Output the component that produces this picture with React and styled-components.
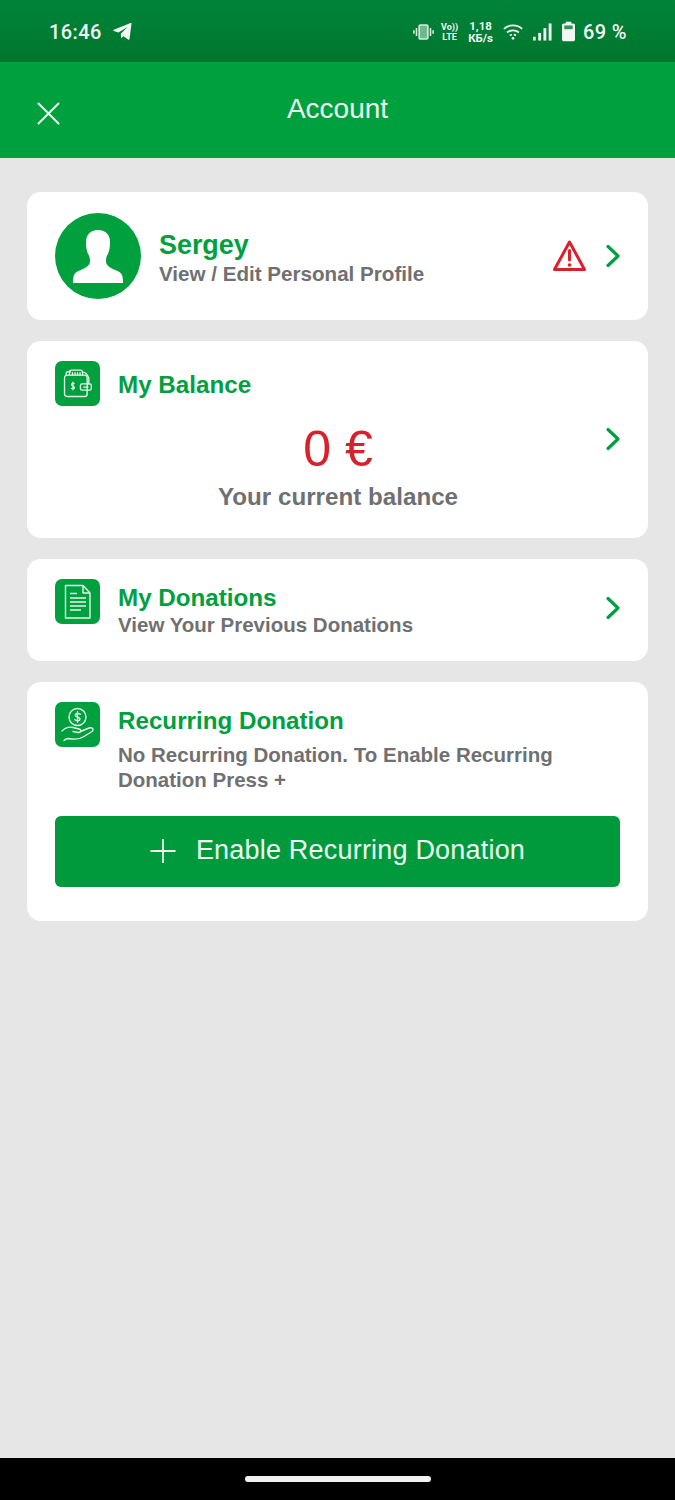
import React from 'react';
import styled, { createGlobalStyle } from 'styled-components';

const green = '#00a03e';
const grey = '#6f7072';

const GlobalStyle = createGlobalStyle`
  html, body {
    margin: 0;
    padding: 0;
    background: #e6e6e6;
  }
  * {
    box-sizing: border-box;
  }
`;

const Screen = styled.div`
  width: 675px;
  height: 1500px;
  display: flex;
  flex-direction: column;
  background: #e6e6e6;
  font-family: "Liberation Sans", Arial, sans-serif;
  overflow: hidden;
`;

const StatusBar = styled.div`
  height: 62px;
  flex: none;
  display: flex;
  align-items: center;
  justify-content: space-between;
  padding: 1px 48px 0 49px;
  background: linear-gradient(180deg, #00843a 0%, #00762e 100%);
  color: #f1f7f2;
  font-family: Roboto, sans-serif;
`;

const StatusGroup = styled.div`
  display: flex;
  align-items: center;
  gap: ${(p) => p.$gap || 0}px;
`;

const Clock = styled.span`
  font-size: 20px;
  font-weight: 500;
  letter-spacing: 0.4px;
`;

const NetSpeed = styled.span`
  display: flex;
  flex-direction: column;
  align-items: center;
  font-size: 11.5px;
  font-weight: 700;
  line-height: 12px;
`;

const VoLte = styled(NetSpeed)`
  font-size: 9px;
  line-height: 10px;
  margin-left: -3px;
`;

const Battery = styled.span`
  font-size: 20px;
  font-weight: 500;
  letter-spacing: 0.4px;
  margin-left: -2px;
`;

const Header = styled.header`
  height: 96px;
  flex: none;
  display: flex;
  align-items: center;
  position: relative;
  justify-content: center;
  padding-bottom: 2px;
  background: ${green};
  color: #eefaf1;
`;

const CloseButton = styled.span`
  position: absolute;
  left: 37px;
  top: 40px;
  display: flex;
`;

const Title = styled.h1`
  margin: 0;
  font-size: 28px;
  font-weight: 400;
`;

const Content = styled.main`
  flex: 1;
  display: flex;
  flex-direction: column;
  gap: 21px;
  padding: 34px 27px 0;
`;

const Card = styled.section`
  width: 621px;
  height: ${(p) => p.$height}px;
  display: flex;
  align-items: ${(p) => p.$align || 'flex-start'};
  background: #fff;
  border-radius: 14px;
  padding: ${(p) => p.$padding || '20px 27px 0 28px'};
`;

const Avatar = styled.div`
  width: 86px;
  height: 86px;
  flex: none;
  border-radius: 50%;
  background: ${green};
  overflow: hidden;
  display: flex;
`;

const IconTile = styled.div`
  width: 45px;
  height: 45px;
  flex: none;
  border-radius: 7px;
  background: ${green};
  display: flex;
  align-items: center;
  justify-content: center;
`;

const Body = styled.div`
  flex: 1;
  min-width: 0;
  margin-left: ${(p) => p.$left || 18}px;
  padding-top: ${(p) => p.$top || 0}px;
`;

const CardTitle = styled.div`
  color: ${green};
  font-size: ${(p) => p.$size || 24.2}px;
  font-weight: 700;
  line-height: ${(p) => p.$line || 28}px;
`;

const CardText = styled.div`
  color: ${grey};
  font-size: ${(p) => p.$size || 20.5}px;
  font-weight: 700;
  line-height: 25px;
  margin-top: ${(p) => p.$top || 0}px;
`;

const ChevronSlot = styled.div`
  flex: none;
  display: flex;
  align-self: center;
  margin-bottom: ${(p) => p.$lift || 0}px;
`;

const BalanceColumn = styled.div`
  flex: 1;
  min-width: 0;
  align-self: stretch;
`;

const BalanceHead = styled.div`
  display: flex;
`;

const Amount = styled.div`
  margin: 14px 0 0 16px;
  text-align: center;
  color: #d9212c;
  font-size: 50px;
  line-height: 58px;
`;

const BalanceLabel = styled.div`
  margin: 5px 0 0 16px;
  text-align: center;
  color: ${grey};
  font-size: 24.2px;
  font-weight: 700;
  line-height: 28px;
`;

const EnableButton = styled.button`
  width: 565px;
  height: 71px;
  margin-top: 24px;
  padding: 0 0 2px;
  display: flex;
  align-items: center;
  justify-content: center;
  gap: 20px;
  border: none;
  border-radius: 6px;
  background: #009a3d;
  color: #eefaf1;
  font-family: inherit;
  font-size: 27px;
  letter-spacing: 0.2px;
`;

const RecurringCard = styled(Card)`
  display: block;
`;

const RecurringHead = styled.div`
  display: flex;
`;

const HomeBar = styled.div`
  height: 42px;
  flex: none;
  display: flex;
  justify-content: center;
  padding-top: 18px;
  background: #000;
`;

const HomePill = styled.div`
  width: 186px;
  height: 6px;
  border-radius: 3px;
  background: #f2f2f2;
`;

const Chevron = ({ lift }) => (
  <ChevronSlot $lift={lift}>
    <svg width="16" height="24" viewBox="0 0 16 24" fill="none">
      <path d="M3 2.500 L13 12 L3 21.500" stroke={green} strokeWidth="3.200" strokeLinecap="round" strokeLinejoin="round" />
    </svg>
  </ChevronSlot>
);

const Warning = () => (
  <svg width="33" height="32" viewBox="0 0 33 32" fill="none" style={{ flex: 'none', marginRight: 19 }}>
    <path d="M16.500 2 L31.500 29.500 L1.500 29.500 Z" stroke="#d9212c" strokeWidth="3" strokeLinejoin="round" />
    <path d="M16.500 10.500 V20" stroke="#d9212c" strokeWidth="3" strokeLinecap="round" />
    <circle cx="16.500" cy="25" r="1.800" fill="#d9212c" />
  </svg>
);

const Person = () => (
  <svg width="86" height="86" viewBox="0 0 86 86">
    <path
      fill="#fff"
      d="M43 17C35 17 31 22 31 29C31 34 31.500 37 33 41C34.500 43 35 45 35 48C35 52 32 54 28 56C23 58 20 59.500 19 62C18 64.500 18 68 18 70H68C68 68 68 64.500 67 62C66 59.500 63 58 58 56C54 54 51 52 51 48C51 45 51.500 43 53 41C54.500 37 55 34 55 29C55 22 51 17 43 17Z"
    />
  </svg>
);

const WalletIcon = () => (
  <svg width="31" height="31" viewBox="0 0 37 37" fill="none" stroke="#e4f5ea" strokeWidth="1.600" strokeLinejoin="round" strokeLinecap="round">
    <path d="M3 12 C3 9.500 5 8.500 7 8.500 H27 C29 8.500 30 10 30 12 V31 C30 33 28.500 34 27 34 H7 C5 34 3 33 3 31 Z" />
    <path d="M5 8.500 V6.500 C5 5 6 4.500 7.500 4.500 H10" />
    <path d="M9 8.500 V4.500 C9 3 10 2.500 11.500 2.500 H22 C23.500 2.500 24.500 3.500 24.500 5 V8.500" />
    <path d="M12.500 8.500 V5.500 M15.500 8.500 V5.500 M18.500 8.500 V5.500 M21.500 8.500 V5.500" />
    <path d="M24.500 5 C27.500 5 30 7 32 12 V19" />
    <rect x="22" y="19" width="13" height="7.500" rx="2" />
    <path d="M26 22.800 H31" />
    <path d="M14.500 18.500 C13 17.800 11.500 18.300 11.500 19.700 C11.500 21.700 14.800 21.300 14.800 23.300 C14.800 24.700 13 25.200 11.300 24.400 M13.100 16.800 V26" />
  </svg>
);

const DocumentIcon = () => (
  <svg width="37" height="37" viewBox="0 0 37 37" fill="none" stroke="#e4f5ea" strokeWidth="1.400" strokeLinejoin="round">
    <path d="M6.500 2.500 H24 L31 10 V35 H6.500 Z" />
    <path d="M24 2.500 V10 H31" />
    <path d="M11 10.500 H18 M11 15 H27 M11 19 H27 M11 23 H27 M11 27 H22" />
  </svg>
);

const HandCoinIcon = () => (
  <svg width="37" height="37" viewBox="0 0 37 37" fill="none" stroke="#e4f5ea" strokeWidth="1.400" strokeLinejoin="round" strokeLinecap="round">
    <circle cx="18.500" cy="11" r="8.500" />
    <path d="M21.300 8.300 C20 7 16.300 7 16.300 9.300 C16.300 11.500 21 10.700 21 13 C21 15.200 17.300 15.200 15.800 13.800 M18.500 5.800 V16.300" />
    <path d="M3 25 C6 22 10 20.500 14 21.500 L20 23 C23 24 22 27 19 26.500 L14 25.500" />
    <path d="M21.500 25.500 L30 22 C33.500 21 35.500 23.500 33 25.500 L25 30.500 C21 33 17 33.500 13 33 L9 32.500 C7.500 32.500 6 33.500 5 34.500" />
  </svg>
);

const TelegramIcon = () => (
  <svg width="19" height="17" viewBox="0 0 19 17" fill="#f1f7f2">
    <path d="M18.500 0.500 L16.500 16 C16.400 16.700 15.700 16.900 15.100 16.500 L10.500 13.200 L8.200 15.300 L7.800 10.800 L14.500 4 L5.500 9.600 L0.800 8 C0 7.700 0 7 0.800 6.700 L17.500 0 C18.100 -0.200 18.600 0 18.500 0.500 Z" />
  </svg>
);

const VibrateIcon = () => (
  <svg width="21" height="18" viewBox="0 0 24 18" fill="none" stroke="#d9ecdf" strokeWidth="1.800">
    <rect x="7" y="1" width="10" height="16" rx="1.500" fill="#6fb98a" />
    <path d="M4 4.500 V13.500 M20 4.500 V13.500 M1 7 V11 M23 7 V11" />
  </svg>
);

const WifiIcon = () => (
  <svg width="20" height="18" viewBox="0 0 22 18" fill="none" stroke="#f1f7f2" strokeWidth="2">
    <path d="M1 5.500 C6.500 0.500 15.500 0.500 21 5.500" />
    <path d="M4.500 9.500 C8 6.500 14 6.500 17.500 9.500" />
    <path d="M7.500 13 C9.500 11.500 12.500 11.500 14.500 13" strokeDasharray="2.500 2" />
    <circle cx="11" cy="16" r="1.500" fill="#f1f7f2" stroke="none" />
  </svg>
);

const SignalIcon = () => (
  <svg width="19" height="18" viewBox="0 0 20 18" fill="#f1f7f2">
    <rect x="0" y="14" width="3" height="4" opacity="0.85" />
    <rect x="5.500" y="10" width="3" height="8" />
    <rect x="11" y="5" width="3" height="13" />
    <rect x="16.500" y="0" width="3" height="18" />
  </svg>
);

const BatteryIcon = () => (
  <svg width="13" height="21" viewBox="0 0 14 21" fill="#f1f7f2">
    <path d="M4 0 H10 V2 H12 C13.200 2 14 2.800 14 4 V19 C14 20.200 13.200 21 12 21 H2 C0.800 21 0 20.200 0 19 V4 C0 2.800 0.800 2 2 2 H4 Z" />
    <rect x="2.500" y="4" width="9" height="4" fill="#2f9256" />
  </svg>
);

const CloseIcon = () => (
  <svg width="23" height="23" viewBox="0 0 23 23" stroke="#eefaf1" strokeWidth="2" strokeLinecap="round">
    <path d="M1.500 1.500 L21.500 21.500 M21.500 1.500 L1.500 21.500" />
  </svg>
);

const PlusIcon = () => (
  <svg width="26" height="26" viewBox="0 0 26 26" stroke="#eefaf1" strokeWidth="1.800">
    <path d="M13 1 V25 M0.500 13 H25.500" />
  </svg>
);

export default function App() {
  return (
    <>
      <GlobalStyle />
      <Screen>
        <StatusBar>
          <StatusGroup $gap={11}>
            <Clock>16:46</Clock>
            <TelegramIcon />
          </StatusGroup>
          <StatusGroup $gap={10}>
            <VibrateIcon />
            <VoLte>
              <span>Vo))</span>
              <span>LTE</span>
            </VoLte>
            <NetSpeed>
              <span>1,18</span>
              <span>КБ/s</span>
            </NetSpeed>
            <WifiIcon />
            <SignalIcon />
            <BatteryIcon />
            <Battery>69 %</Battery>
          </StatusGroup>
        </StatusBar>

        <Header>
          <CloseButton>
            <CloseIcon />
          </CloseButton>
          <Title>Account</Title>
        </Header>

        <Content>
          <Card $height={128} $align="center" $padding="0 27px 0 28px">
            <Avatar>
              <Person />
            </Avatar>
            <Body $top={3}>
              <CardTitle $size={26.900} $line={30}>Sergey</CardTitle>
              <CardText $size={20.600} $top={1}>View / Edit Personal Profile</CardText>
            </Body>
            <Warning />
            <Chevron />
          </Card>

          <Card $height={197}>
            <BalanceColumn>
              <BalanceHead>
                <IconTile>
                  <WalletIcon />
                </IconTile>
                <Body $top={10}>
                  <CardTitle>My Balance</CardTitle>
                </Body>
              </BalanceHead>
              <Amount>0 €</Amount>
              <BalanceLabel>Your current balance</BalanceLabel>
            </BalanceColumn>
            <Chevron lift={21} />
          </Card>

          <Card $height={102}>
            <IconTile>
              <DocumentIcon />
            </IconTile>
            <Body $top={5}>
              <CardTitle>My Donations</CardTitle>
              <CardText>View Your Previous Donations</CardText>
            </Body>
            <Chevron lift={24} />
          </Card>

          <RecurringCard $height={239}>
            <RecurringHead>
              <IconTile>
                <HandCoinIcon />
              </IconTile>
              <Body $top={5}>
                <CardTitle>Recurring Donation</CardTitle>
                <CardText $top={7}>
                  No Recurring Donation. To Enable Recurring
                  <br />
                  Donation Press +
                </CardText>
              </Body>
            </RecurringHead>
            <EnableButton>
              <PlusIcon />
              Enable Recurring Donation
            </EnableButton>
          </RecurringCard>
        </Content>

        <HomeBar>
          <HomePill />
        </HomeBar>
      </Screen>
    </>
  );
}
